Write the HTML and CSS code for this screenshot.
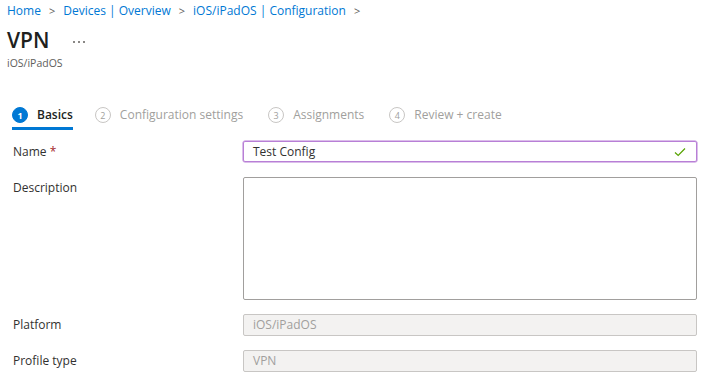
FILE: index.html
```html
<!DOCTYPE html>
<html>
<head>
<meta charset="utf-8">
<link rel="stylesheet" href="styles.css">
</head>
<body>
<div class="page">
  <nav class="crumbs">
    <a class="crumb">Home</a><span class="sep">&gt;</span>
    <a class="crumb">Devices | Overview</a><span class="sep">&gt;</span>
    <a class="crumb">iOS/iPadOS | Configuration</a><span class="sep">&gt;</span>
  </nav>
  <div class="title-row">
    <h1 class="title">VPN</h1>
    <span class="more"><i></i><i></i><i></i></span>
  </div>
  <div class="subtitle">iOS/iPadOS</div>

  <div class="tabs">
    <div class="tab active"><span class="num">1</span><span class="label">Basics</span></div>
    <div class="tab"><span class="num">2</span><span class="label">Configuration settings</span></div>
    <div class="tab"><span class="num">3</span><span class="label">Assignments</span></div>
    <div class="tab"><span class="num">4</span><span class="label">Review + create</span></div>
  </div>

  <div class="form">
    <div class="row">
      <div class="flabel">Name <span class="req">*</span></div>
      <div class="field focused">
        <span class="val">Test Config</span>
        <svg class="check" width="12" height="10" viewBox="0 0 12 10"><path d="M1 5.5 L4.2 8.5 L11 1.5" fill="none" stroke="#57a300" stroke-width="1.2"/></svg>
      </div>
    </div>
    <div class="row">
      <div class="flabel">Description</div>
      <div class="field area"></div>
    </div>
    <div class="row">
      <div class="flabel">Platform</div>
      <div class="field disabled"><span class="val">iOS/iPadOS</span></div>
    </div>
    <div class="row">
      <div class="flabel">Profile type</div>
      <div class="field disabled"><span class="val">VPN</span></div>
    </div>
  </div>
</div>
</body>
</html>
```
FILE: styles.css
```css
* { box-sizing: border-box; }
html, body { margin: 0; padding: 0; background: #fff; }
body { font-family: "Open Sans", "Noto Sans", sans-serif; color: #323130; }
.page { padding: 0 0 0 7px; }
.crumbs { display: flex; align-items: center; height: 21px; font-size: 12px; }
.crumb { color: #0078d4; }
.sep { color: #605e5c; margin: 0 8px; font-size: 11px; }
.title-row { display: flex; align-items: center; height: 28px; margin-top: 5px; }
.title { margin: 0; font-size: 21px; font-weight: 600; color: #201f1e; line-height: 28px; }
.more { margin-left: 24px; margin-top: 3px; display: flex; gap: 3px; }
.more i { display: block; width: 2px; height: 2px; background: #8a8886; }
.subtitle { font-size: 10.5px; color: #605e5c; line-height: 14px; margin-top: 2px; }
.tabs { display: flex; margin-top: 32px; padding-left: 5px; height: 28px; }
.tab { display: flex; align-items: flex-start; margin-right: 25px; height: 28px; border-bottom: 3px solid transparent; }
.tab.active { margin-right: 22px; border-bottom-color: #0078d4; }
.num { width: 16px; height: 16px; border-radius: 50%; border: 1px solid #c8c6c4; color: #a19f9d; font-size: 9px; display: flex; align-items: center; justify-content: center; margin-right: 9px; margin-top: 5px; }
.tab.active .num { background: #0078d4; border-color: #0078d4; color: #fff; font-weight: 700; }
.label { font-size: 12px; color: #a19f9d; line-height: 16px; margin-top: 5px; }
.tab.active .label { color: #201f1e; font-weight: 600; }
.form { padding-left: 6px; margin-top: 11px; }
.row { display: flex; align-items: flex-start; margin-bottom: 14px; }
.flabel { width: 230px; font-size: 12px; line-height: 22px; color: #323130; }
.req { color: #a4262c; }
.field { width: 454px; height: 22px; border: 1px solid #a19f9d; border-radius: 2px; display: flex; align-items: center; justify-content: space-between; padding: 0 10px 0 9px; font-size: 12px; }
.field.focused { height: 21px; border: 1px solid #b87fd6; box-shadow: 0 0 0 0.5px #b87fd6; }
.field.area { height: 123px; }
.field.disabled { background: #f3f2f1; border-color: #c8c6c4; color: #a19f9d; }
.val { line-height: 20px; }
.check { display: block; }
```
